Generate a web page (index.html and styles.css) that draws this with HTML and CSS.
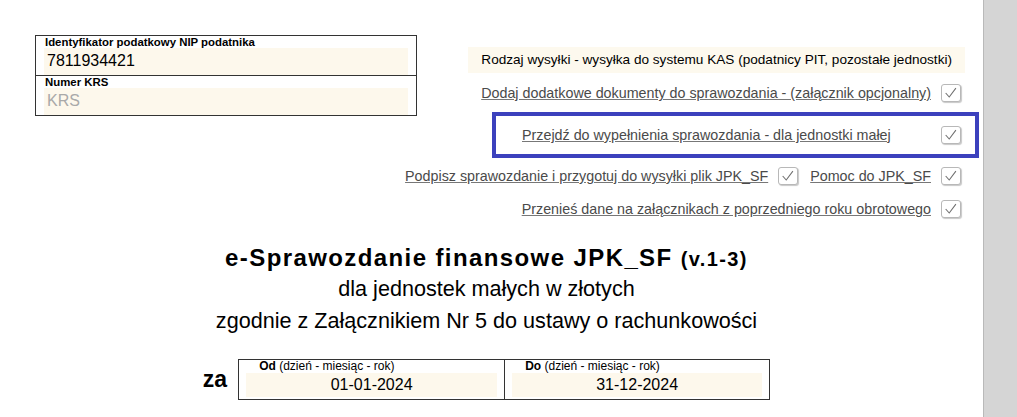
FILE: index.html
```html
<!DOCTYPE html>
<html lang="pl">
<head>
    <meta charset="UTF-8">
    <title>e-Sprawozdanie finansowe JPK_SF</title>
    <link rel="stylesheet" href="styles.css">
</head>
<body>
    <div class="page">
        <main class="sheet">
            <div class="top">
                <div class="id-box">
                    <div class="id-row">
                        <div class="id-label">Identyfikator podatkowy NIP podatnika</div>
                        <div class="id-value">7811934421</div>
                    </div>
                    <div class="id-row">
                        <div class="id-label">Numer KRS</div>
                        <div class="id-value empty">KRS</div>
                    </div>
                </div>

                <div class="actions">
                    <div class="send-type">Rodzaj wysyłki - wysyłka do systemu KAS (podatnicy PIT, pozostałe jednostki)</div>

                    <div class="action-row row-attach">
                        <a class="action-link" href="#">Dodaj dodatkowe dokumenty do sprawozdania - (załącznik opcjonalny)</a>
                        <span class="check"><svg viewBox="0 0 20 18"><polyline points="4,9 8,13.5 15.5,3.5"/></svg></span>
                    </div>

                    <div class="action-row frame">
                        <a class="action-link" href="#">Przejdź do wypełnienia sprawozdania - dla jednostki małej</a>
                        <span class="check"><svg viewBox="0 0 20 18"><polyline points="4,9 8,13.5 15.5,3.5"/></svg></span>
                    </div>

                    <div class="action-row row-sign">
                        <a class="action-link" href="#">Podpisz sprawozdanie i przygotuj do wysyłki plik JPK_SF</a>
                        <span class="check"><svg viewBox="0 0 20 18"><polyline points="4,9 8,13.5 15.5,3.5"/></svg></span>
                        <a class="action-link help" href="#">Pomoc do JPK_SF</a>
                        <span class="check"><svg viewBox="0 0 20 18"><polyline points="4,9 8,13.5 15.5,3.5"/></svg></span>
                    </div>

                    <div class="action-row row-copy">
                        <a class="action-link" href="#">Przenieś dane na załącznikach z poprzedniego roku obrotowego</a>
                        <span class="check"><svg viewBox="0 0 20 18"><polyline points="4,9 8,13.5 15.5,3.5"/></svg></span>
                    </div>
                </div>
            </div>

            <div class="heading">
                <h1>e-Sprawozdanie finansowe JPK_SF <small>(v.1-3)</small></h1>
                <p>dla jednostek małych w złotych</p>
                <p>zgodnie z Załącznikiem Nr 5 do ustawy o rachunkowości</p>
            </div>

            <div class="period">
                <span class="za">za</span>
                <div class="period-box">
                    <div class="period-cell">
                        <div class="period-label"><b>Od</b> (dzień - miesiąc - rok)</div>
                        <div class="period-value">01-01-2024</div>
                    </div>
                    <div class="period-cell">
                        <div class="period-label"><b>Do</b> (dzień - miesiąc - rok)</div>
                        <div class="period-value">31-12-2024</div>
                    </div>
                </div>
            </div>
        </main>
        <aside class="side"></aside>
    </div>
</body>
</html>
```

FILE: styles.css
```css
body {
    margin: 0;
    font-family: "Liberation Sans", Arial, sans-serif;
    color: #000;
    background-color: #fff;
}

.page {
    display: flex;
    height: 100vh;
    overflow: hidden;
}

.sheet {
    flex: 1;
    min-width: 0;
    border-right: 1px solid #b9b9b9;
}

.side {
    flex-shrink: 0;
    width: 33px;
    background-color: #d5d5d5;
}

/* top part: id box on the left, actions on the right */
.top {
    display: flex;
    align-items: flex-start;
}

.id-box {
    flex-shrink: 0;
    width: 382px;
    margin: 35px 0 0 35px;
    padding: 0 8px;
    box-sizing: border-box;
    border: 1px solid #333;
}

.id-row + .id-row {
    border-top: 1px solid #333;
    margin: 0 -8px;
    padding: 0 8px;
}

.id-label {
    font-size: 11.4px;
    font-weight: bold;
    line-height: 12px;
    padding-left: 1px;
}

.id-value {
    height: 27px;
    line-height: 26px;
    padding-left: 3px;
    font-size: 16px;
    background-color: #fdf8ec;
}

.id-value.empty {
    color: #a9a9a9;
}

.actions {
    flex: 1;
    min-width: 0;
    display: flex;
    flex-direction: column;
    align-items: flex-end;
    margin-top: 47px;
    padding-right: 22px;
    white-space: nowrap;
}

.send-type {
    height: 26px;
    line-height: 26px;
    padding: 0 13px;
    margin-right: -4px;
    font-size: 13.6px;
    background-color: #fdf9ee;
}

.action-row {
    display: flex;
    align-items: center;
    height: 20px;
}

.row-attach {
    margin-top: 10px;
}

.frame {
    width: 487px;
    height: 46px;
    margin-top: 9px;
    margin-right: -18px;
    padding: 0 14px 0 26px;
    box-sizing: border-box;
    border: 4px solid #3c41bd;
    justify-content: space-between;
}

.row-sign {
    margin-top: 8px;
}

.row-copy {
    margin-top: 13px;
}

.action-link {
    flex-shrink: 0;
    font-size: 14.3px;
    color: #4a4a4a;
    text-decoration: underline;
    text-decoration-color: #777;
    margin-right: 10px;
}

.help {
    margin-left: 12px;
}

.check {
    flex-shrink: 0;
    display: inline-block;
    width: 20px;
    height: 18px;
    box-sizing: border-box;
    border: 1px solid #b8b8b8;
    border-radius: 3px;
    box-shadow: 1px 1px 1px rgba(0, 0, 0, 0.22);
    background-color: #fff;
}

.check svg {
    display: block;
    width: 18px;
    height: 16px;
    fill: none;
    stroke: #6e6e6e;
    stroke-width: 1.2;
}

/* title */
.heading {
    margin-top: 25px;
    padding-right: 10px;
    text-align: center;
}

.heading h1 {
    margin: 0;
    font-size: 24px;
    letter-spacing: 1.4px;
    line-height: 27px;
    font-weight: bold;
}

.heading h1 small {
    font-size: 20px;
}

.heading p {
    margin: 0;
    font-size: 21.6px;
    line-height: 32px;
}

/* period */
.period {
    display: flex;
    justify-content: center;
    align-items: center;
    margin-top: 22px;
    padding-right: 10px;
}

.za {
    font-size: 23px;
    font-weight: bold;
    margin-right: 11px;
}

.period-box {
    display: flex;
    border: 1px solid #333;
}

.period-cell {
    width: 265px;
    height: 39px;
    padding: 0 7px;
    box-sizing: border-box;
}

.period-cell + .period-cell {
    border-left: 1px solid #333;
}

.period-label {
    font-size: 12px;
    line-height: 13px;
    padding-left: 13px;
}

.period-value {
    height: 24px;
    line-height: 24px;
    font-size: 16px;
    text-align: center;
    background-color: #fdf8ec;
}
```
